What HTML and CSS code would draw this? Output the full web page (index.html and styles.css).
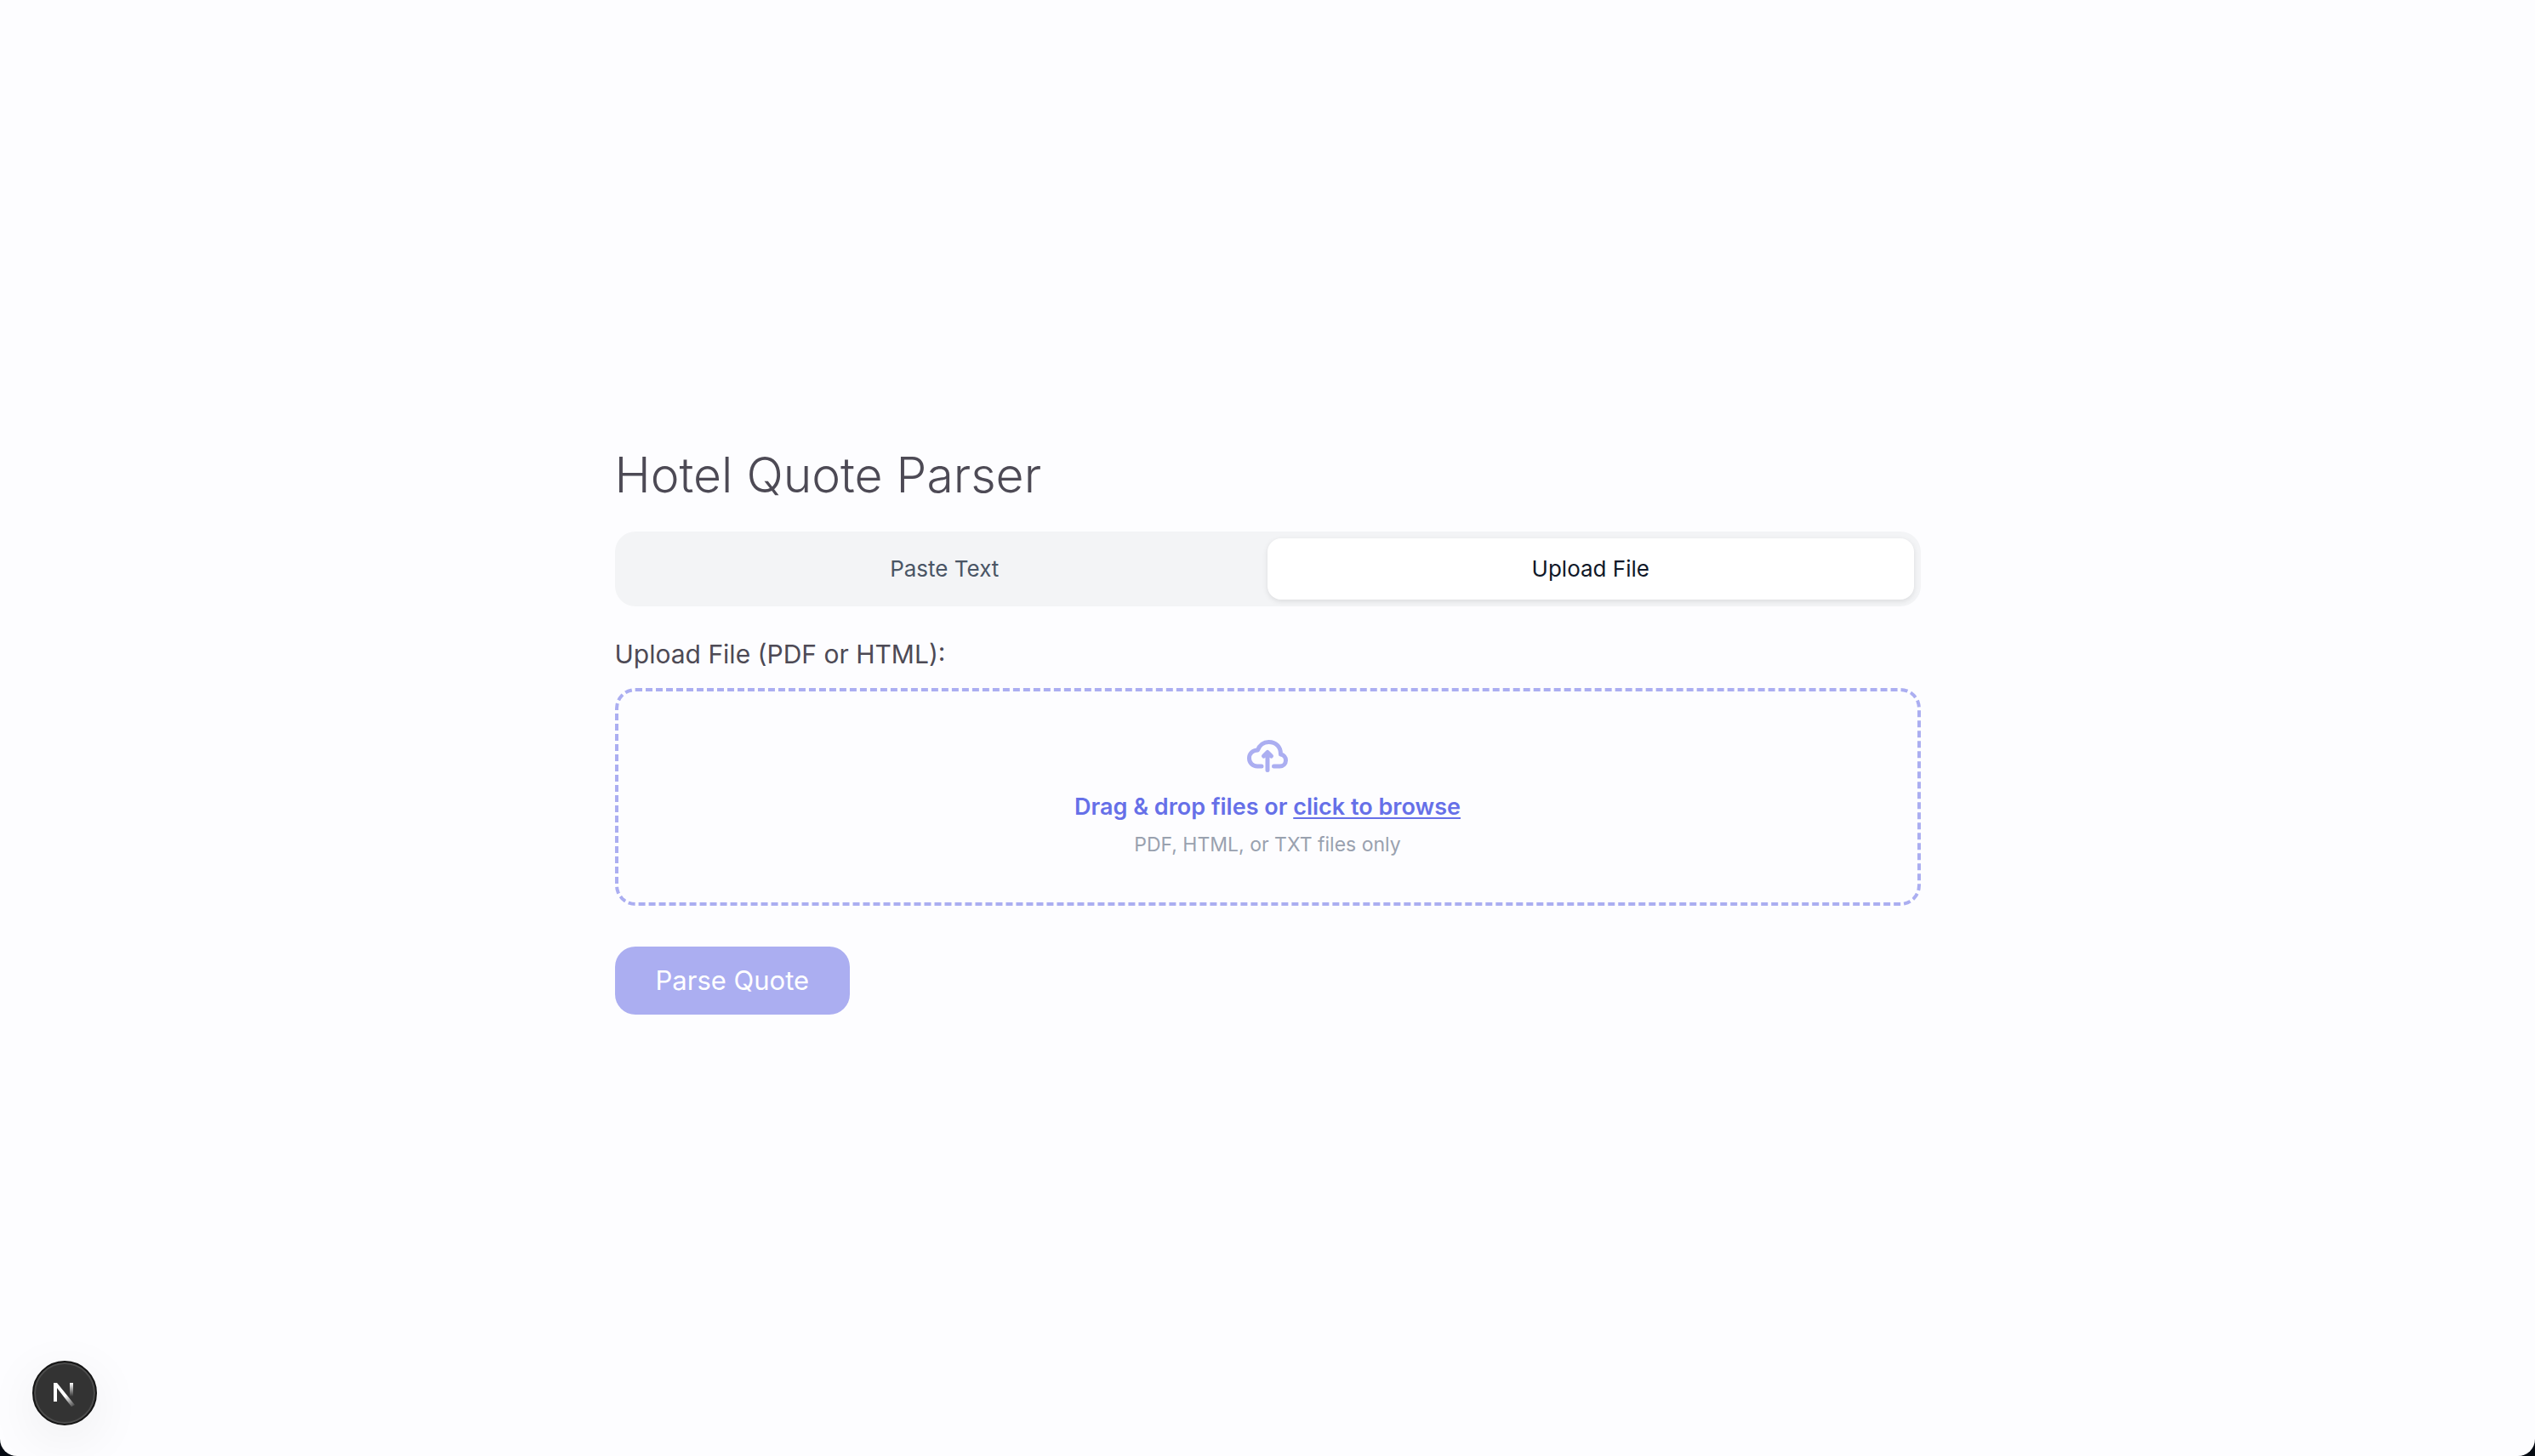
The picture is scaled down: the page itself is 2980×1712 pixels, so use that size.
FILE: index.html
```html
<!DOCTYPE html>
<html lang="en">
<head>
<meta charset="utf-8">
<meta name="viewport" content="width=device-width, initial-scale=1">
<title>Hotel Quote Parser</title>
<link rel="stylesheet" href="styles.css">
</head>
<body>
<div class="page">
  <main class="parser">
    <h1 class="title">Hotel Quote Parser</h1>
    <div class="tabs" role="tablist">
      <button class="tab" type="button" role="tab" aria-selected="false">Paste Text</button>
      <button class="tab tab-active" type="button" role="tab" aria-selected="true">Upload File</button>
    </div>
    <label class="field-label" for="quote-file">Upload File (PDF or HTML):</label>
    <label class="dropzone">
      <input class="file-input" id="quote-file" type="file" accept=".pdf,.html,.txt">
      <svg class="cloud" viewBox="17 19 48 40" fill="none" stroke="currentColor" stroke-width="5" stroke-linecap="round" stroke-linejoin="round" aria-hidden="true">
        <path d="M34 51H29C23.500 51 19.500 47 19.500 41.500C19.500 36 23.500 32.300 29.500 32C31.500 26 36.500 22.500 42.500 22.500C51 22.500 56.800 28.500 56.500 37C60 37.500 62.500 40.500 62.500 44C62.500 48 59.500 51 55.500 51H48.500"/>
        <path d="M41 55.500V35M36.500 39L41 34.500L45.500 39"/>
      </svg>
      <span class="drop-text">Drag &amp; drop files or <span class="browse">click to browse</span></span>
      <span class="drop-hint">PDF, HTML, or TXT files only</span>
    </label>
    <button class="submit" type="button" disabled>Parse Quote</button>
  </main>
  <button class="dev-badge" type="button" aria-label="Open Next.js Dev Tools">
    <svg class="dev-logo" viewBox="0 -4 28 34" aria-hidden="true">
      <defs>
        <linearGradient id="stem" x1="0" y1="0" x2="0" y2="1"><stop offset="0" stop-color="#fff"/><stop offset="1" stop-color="#fff" stop-opacity="0"/></linearGradient>
        <linearGradient id="slash" gradientUnits="userSpaceOnUse" x1="15" y1="16" x2="26" y2="30"><stop offset="0" stop-color="#fff"/><stop offset="1" stop-color="#fff" stop-opacity="0"/></linearGradient>
      </defs>
      <rect x="20" y="1" width="4" height="16" fill="url(#stem)"/>
      <path d="M1 1H5L26 27L22 29L5 7V23H1Z" fill="url(#slash)"/>
    </svg>
  </button>
</div>
</body>
</html>
```
FILE: styles.css
```css
* {
  box-sizing: border-box;
}

html {
  background: #050a12;
}

body {
  margin: 0;
  font-family: Inter, "Liberation Sans", sans-serif;
  color: #4d4a55;
}

button {
  border: 0;
  font-family: inherit;
  cursor: pointer;
}

.page {
  display: flex;
  align-items: center;
  justify-content: center;
  min-height: 100vh;
  border-radius: 0 0 20px 20px;
  background: #fdfdff;
  overflow: hidden;
}

.parser {
  display: flex;
  flex-direction: column;
  width: 100%;
  max-width: 1535px;
}

.title {
  margin: 0 0 26px;
  font-size: 57px;
  font-weight: 300;
  line-height: 80px;
}

.tabs {
  display: flex;
  margin-bottom: 32px;
  padding: 8px;
  border-radius: 24px;
  background: #f3f4f6;
}

.tab {
  flex: 1;
  padding: 16px;
  border-radius: 16px;
  background: transparent;
  color: #4a5565;
  font-size: 26px;
  line-height: 40px;
}

.tab-active {
  background: #fff;
  color: #101828;
  box-shadow: 0 2px 6px rgba(0, 0, 0, 0.1);
}

.field-label {
  margin-bottom: 16px;
  font-size: 30px;
  line-height: 48px;
}

.dropzone {
  display: flex;
  flex-direction: column;
  align-items: center;
  margin-bottom: 48px;
  padding: 56px 48px 52px;
  border: 4px dashed #abaef1;
  border-radius: 24px;
  cursor: pointer;
}

.file-input {
  position: absolute;
  width: 1px;
  height: 1px;
  opacity: 0;
}

.cloud {
  width: 48px;
  height: 40px;
  margin-bottom: 20px;
  color: #abaef1;
}

.drop-text {
  margin-bottom: 8px;
  color: #6670e8;
  font-size: 27px;
  font-weight: 600;
  line-height: 40px;
}

.browse {
  text-decoration: underline;
  text-decoration-thickness: 2px;
  text-underline-offset: 3px;
}

.drop-hint {
  color: #99a1af;
  font-size: 23px;
  line-height: 32px;
}

.submit {
  align-self: flex-start;
  padding: 16px 48px;
  border-radius: 24px;
  background: #abaef1;
  color: #fff;
  font-size: 31px;
  line-height: 48px;
}

.dev-badge {
  position: fixed;
  bottom: 36px;
  left: 38px;
  display: flex;
  align-items: center;
  justify-content: center;
  width: 76px;
  height: 76px;
  padding: 0;
  border: 2px solid #151515;
  border-radius: 50%;
  background: #333;
  box-shadow: inset 0 0 0 2px #4c4c4c, 0 16px 64px rgba(0, 0, 0, 0.07);
}

.dev-logo {
  width: 28px;
  height: 34px;
}
```
